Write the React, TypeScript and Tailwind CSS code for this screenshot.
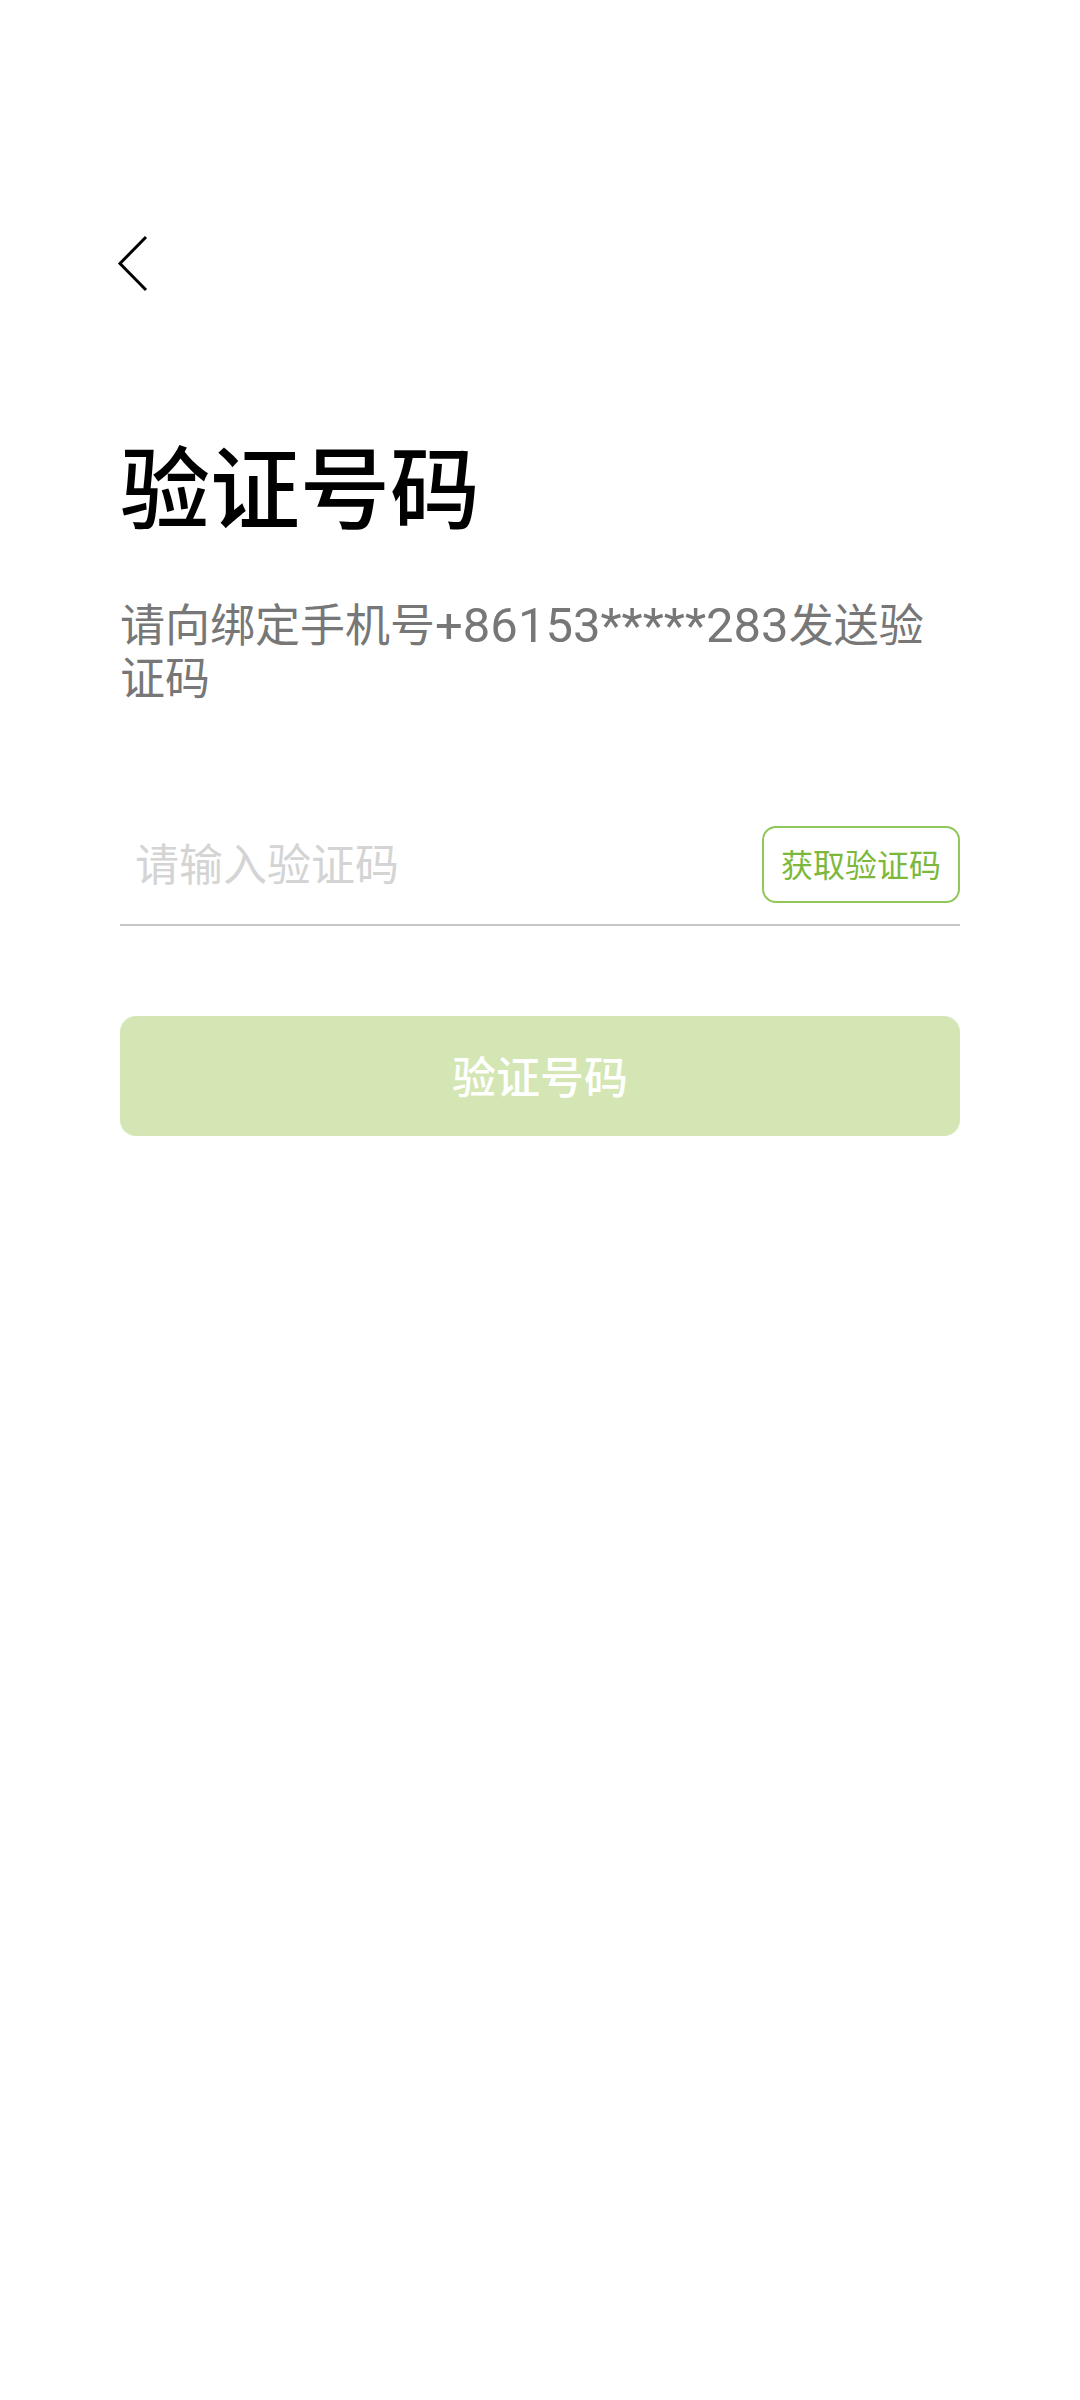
import { useState } from 'react';

const fontStack = 'Roboto, "Noto Sans CJK SC", sans-serif';

export default function App() {
  const [code, setCode] = useState('');

  return (
    <div className="min-h-screen bg-white px-[120px]" style={{ fontFamily: fontStack }}>
      <div className="pt-[235px]">
        <button className="-ml-[3px] block">
          <svg width="32" height="58" viewBox="0 0 32 58" fill="none">
            <path d="M29 2 L3 28.5 L29 55" stroke="#000" strokeWidth="3" strokeLinejoin="miter" />
          </svg>
        </button>
      </div>

      <h1 className="mt-[154px] text-[90px] leading-none font-medium text-black">验证号码</h1>

      <p className="mt-[62px] text-[45px] leading-[53px] text-[#777777]">
        <span>请向绑定手机号</span>
        <span className="inline-block text-[49px] leading-[53px]">+86153*****283</span>
        <span>发送验</span>
        <span>证码</span>
      </p>

      <div className="mt-[98px] flex h-[122px] items-center justify-between border-b-2 border-[#c8c8c8]">
        <input
          value={code}
          onChange={(e) => setCode(e.target.value)}
          placeholder="请输入验证码"
          className="ml-[15px] w-[520px] bg-transparent pt-[3px] text-[44px] text-black outline-none placeholder:text-[#d4d4d4]"
        />
        <button className="flex h-[77px] w-[198px] items-center justify-center rounded-[14px] border-2 border-[#8fc75a] pt-[3px] text-[32px] text-[#7cb83c]">
          获取验证码
        </button>
      </div>

      <button className="mt-[90px] flex h-[120px] w-full items-center justify-center rounded-[16px] bg-[#d3e6b3] pt-[6px] text-[44px] font-medium text-white">
        验证号码
      </button>
    </div>
  );
}
